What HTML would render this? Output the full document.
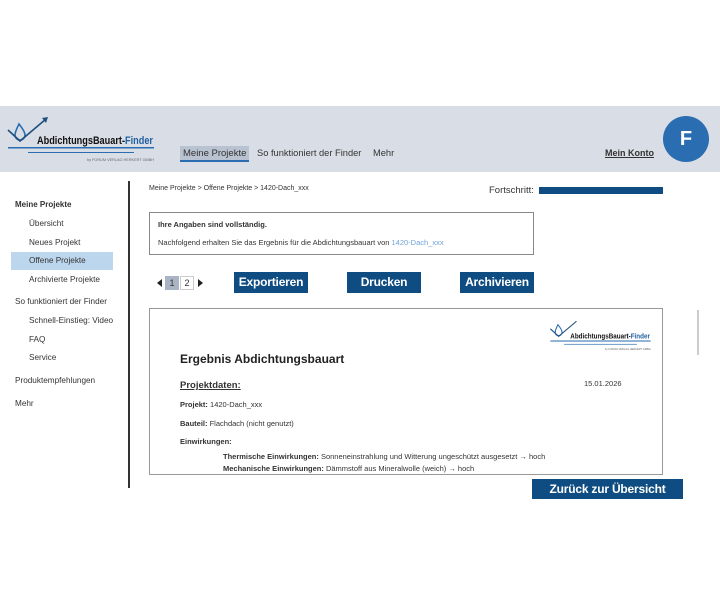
<!DOCTYPE html>
<html><head><meta charset="utf-8"><style>
*{margin:0;padding:0;box-sizing:border-box}
body{width:720px;height:600px;background:#fff;font-family:"Liberation Sans",sans-serif;color:#333;position:relative;overflow:hidden}
.a{position:absolute;white-space:nowrap}
.hdr{position:absolute;left:0;top:106px;width:720px;height:66px;background:#d9dee6}
.btn{position:absolute;background:#0f4c81;color:#fff;font-size:12px;font-weight:bold;letter-spacing:-0.2px;text-align:center;line-height:21px;height:21px}
.nav{font-size:8.2px;color:#333}
</style></head><body>
<div class="hdr"></div>
<svg class="a" style="left:6px;top:114px" width="150" height="50" viewBox="0 0 150 50">
<path d="M13 10 C10 16 9 19 9 21 A5 5 0 0 0 19 21 C19 19 17 15 13 10Z" fill="none" stroke="#2a6db0" stroke-width="1.6"/>
<path d="M2 16 L14 27 L40 5" fill="none" stroke="#1e4f7f" stroke-width="1.6"/>
<path d="M36 4 L42 3 L40 9Z" fill="#1e4f7f"/>
<text x="31" y="30" font-family="Liberation Sans" font-weight="bold" font-size="11" textLength="116" lengthAdjust="spacingAndGlyphs" fill="#111">AbdichtungsBauart-<tspan fill="#1f5f9f">Finder</tspan></text>
<rect x="2" y="33" width="146" height="1.5" fill="#2a6db0"/>
<rect x="22" y="38" width="106" height="1" fill="#2a6db0"/>
<text x="148" y="47" text-anchor="end" font-family="Liberation Sans" font-size="3.8" fill="#666">by FORUM VERLAG HERKERT GMBH</text>
</svg>
<div class="a" style="left:180px;top:146px;height:16px;padding:0 3px;background:#b8c2d0;border-bottom:2px solid #2a6db0;font-size:9.5px;line-height:15px">Meine Projekte</div>
<div class="a" style="left:257px;top:148px;font-size:9.3px">So funktioniert der Finder</div>
<div class="a" style="left:373px;top:148px;font-size:9.3px">Mehr</div>
<div class="a" style="left:605px;top:148px;font-size:9px;font-weight:bold;text-decoration:underline">Mein Konto</div>
<div class="a" style="left:663px;top:116px;width:46px;height:46px;border-radius:50%;background:#2a6db0;color:#fff;font-weight:bold;font-size:20px;text-align:center;line-height:46px">F</div>

<div class="a" style="left:128px;top:181px;width:2px;height:307px;background:#333"></div>
<div class="a nav" style="left:15px;top:200px;font-weight:bold;font-size:8px">Meine Projekte</div>
<div class="a nav" style="left:29px;top:219px">Übersicht</div>
<div class="a nav" style="left:29px;top:238px">Neues Projekt</div>
<div class="a" style="left:11px;top:252px;width:102px;height:18px;background:#bcd6ee"></div>
<div class="a nav" style="left:29px;top:256px">Offene Projekte</div>
<div class="a nav" style="left:29px;top:275px">Archivierte Projekte</div>
<div class="a nav" style="left:15px;top:297px">So funktioniert der Finder</div>
<div class="a nav" style="left:29px;top:316px">Schnell-Einstieg: Video</div>
<div class="a nav" style="left:29px;top:335px">FAQ</div>
<div class="a nav" style="left:29px;top:353px">Service</div>
<div class="a nav" style="left:15px;top:376px">Produktempfehlungen</div>
<div class="a nav" style="left:15px;top:399px">Mehr</div>

<div class="a" style="left:149px;top:185px;font-size:7px">Meine Projekte &gt; Offene Projekte &gt; 1420-Dach_xxx</div>
<div class="a" style="left:489px;top:185px;font-size:9.5px">Fortschritt:</div>
<div class="a" style="left:539px;top:187px;width:124px;height:7px;background:#0f4c81"></div>

<div class="a" style="left:149px;top:212px;width:385px;height:43px;border:1px solid #888"></div>
<div class="a" style="left:158px;top:220px;font-size:7.5px;font-weight:bold">Ihre Angaben sind vollständig.</div>
<div class="a" style="left:158px;top:238px;font-size:7.5px">Nachfolgend erhalten Sie das Ergebnis für die Abdichtungsbauart von <span style="color:#6fa3d8">1420-Dach_xxx</span></div>

<div class="a" style="left:157px;top:279px;width:0;height:0;border-top:4px solid transparent;border-bottom:4px solid transparent;border-right:5px solid #222"></div>
<div class="a" style="left:165px;top:276px;width:14px;height:14px;background:#a9b4c4;font-size:9px;text-align:center;line-height:14px">1</div>
<div class="a" style="left:180px;top:276px;width:14px;height:14px;border:1px solid #ccc;font-size:9px;text-align:center;line-height:12px">2</div>
<div class="a" style="left:198px;top:279px;width:0;height:0;border-top:4px solid transparent;border-bottom:4px solid transparent;border-left:5px solid #222"></div>
<div class="btn a" style="left:234px;top:272px;width:74px">Exportieren</div>
<div class="btn a" style="left:347px;top:272px;width:74px">Drucken</div>
<div class="btn a" style="left:460px;top:272px;width:74px">Archivieren</div>

<div class="a" style="left:149px;top:308px;width:514px;height:167px;border:1px solid #999;overflow:hidden">
<svg class="a" style="left:399px;top:8px" width="103" height="36" viewBox="0 0 150 50">
<path d="M13 10 C10 16 9 19 9 21 A5 5 0 0 0 19 21 C19 19 17 15 13 10Z" fill="none" stroke="#2a6db0" stroke-width="1.6"/>
<path d="M2 16 L14 27 L40 5" fill="none" stroke="#1e4f7f" stroke-width="1.6"/>
<text x="31" y="30" font-family="Liberation Sans" font-weight="bold" font-size="11" textLength="116" lengthAdjust="spacingAndGlyphs" fill="#111">AbdichtungsBauart-<tspan fill="#1f5f9f">Finder</tspan></text>
<rect x="2" y="33" width="146" height="1.5" fill="#2a6db0"/>
<rect x="22" y="38" width="106" height="1" fill="#2a6db0"/>
<text x="148" y="47" text-anchor="end" font-family="Liberation Sans" font-size="3.8" fill="#666">by FORUM VERLAG HERKERT GMBH</text>
</svg>
<div class="a" style="left:30px;top:43px;font-size:12px;font-weight:bold;color:#222">Ergebnis Abdichtungsbauart</div>
<div class="a" style="left:30px;top:71px;font-size:9.5px;font-weight:bold;text-decoration:underline">Projektdaten:</div>
<div class="a" style="left:434px;top:70px;font-size:7.5px">15.01.2026</div>
<div class="a" style="left:30px;top:91px;font-size:7.5px"><b>Projekt:</b> 1420-Dach_xxx</div>
<div class="a" style="left:30px;top:110px;font-size:7.5px"><b>Bauteil:</b> Flachdach (nicht genutzt)</div>
<div class="a" style="left:30px;top:128px;font-size:7.5px;font-weight:bold">Einwirkungen:</div>
<div class="a" style="left:73px;top:143px;font-size:7.5px"><b>Thermische Einwirkungen:</b> Sonneneinstrahlung und Witterung ungeschützt ausgesetzt → hoch</div>
<div class="a" style="left:73px;top:155px;font-size:7.5px"><b>Mechanische Einwirkungen:</b> Dämmstoff aus Mineralwolle (weich) → hoch</div>
</div>
<div class="a" style="left:697px;top:310px;width:2px;height:45px;background:#ccc"></div>
<div class="btn a" style="left:532px;top:479px;width:151px;height:20px;line-height:20px">Zurück zur Übersicht</div>
</body></html>
